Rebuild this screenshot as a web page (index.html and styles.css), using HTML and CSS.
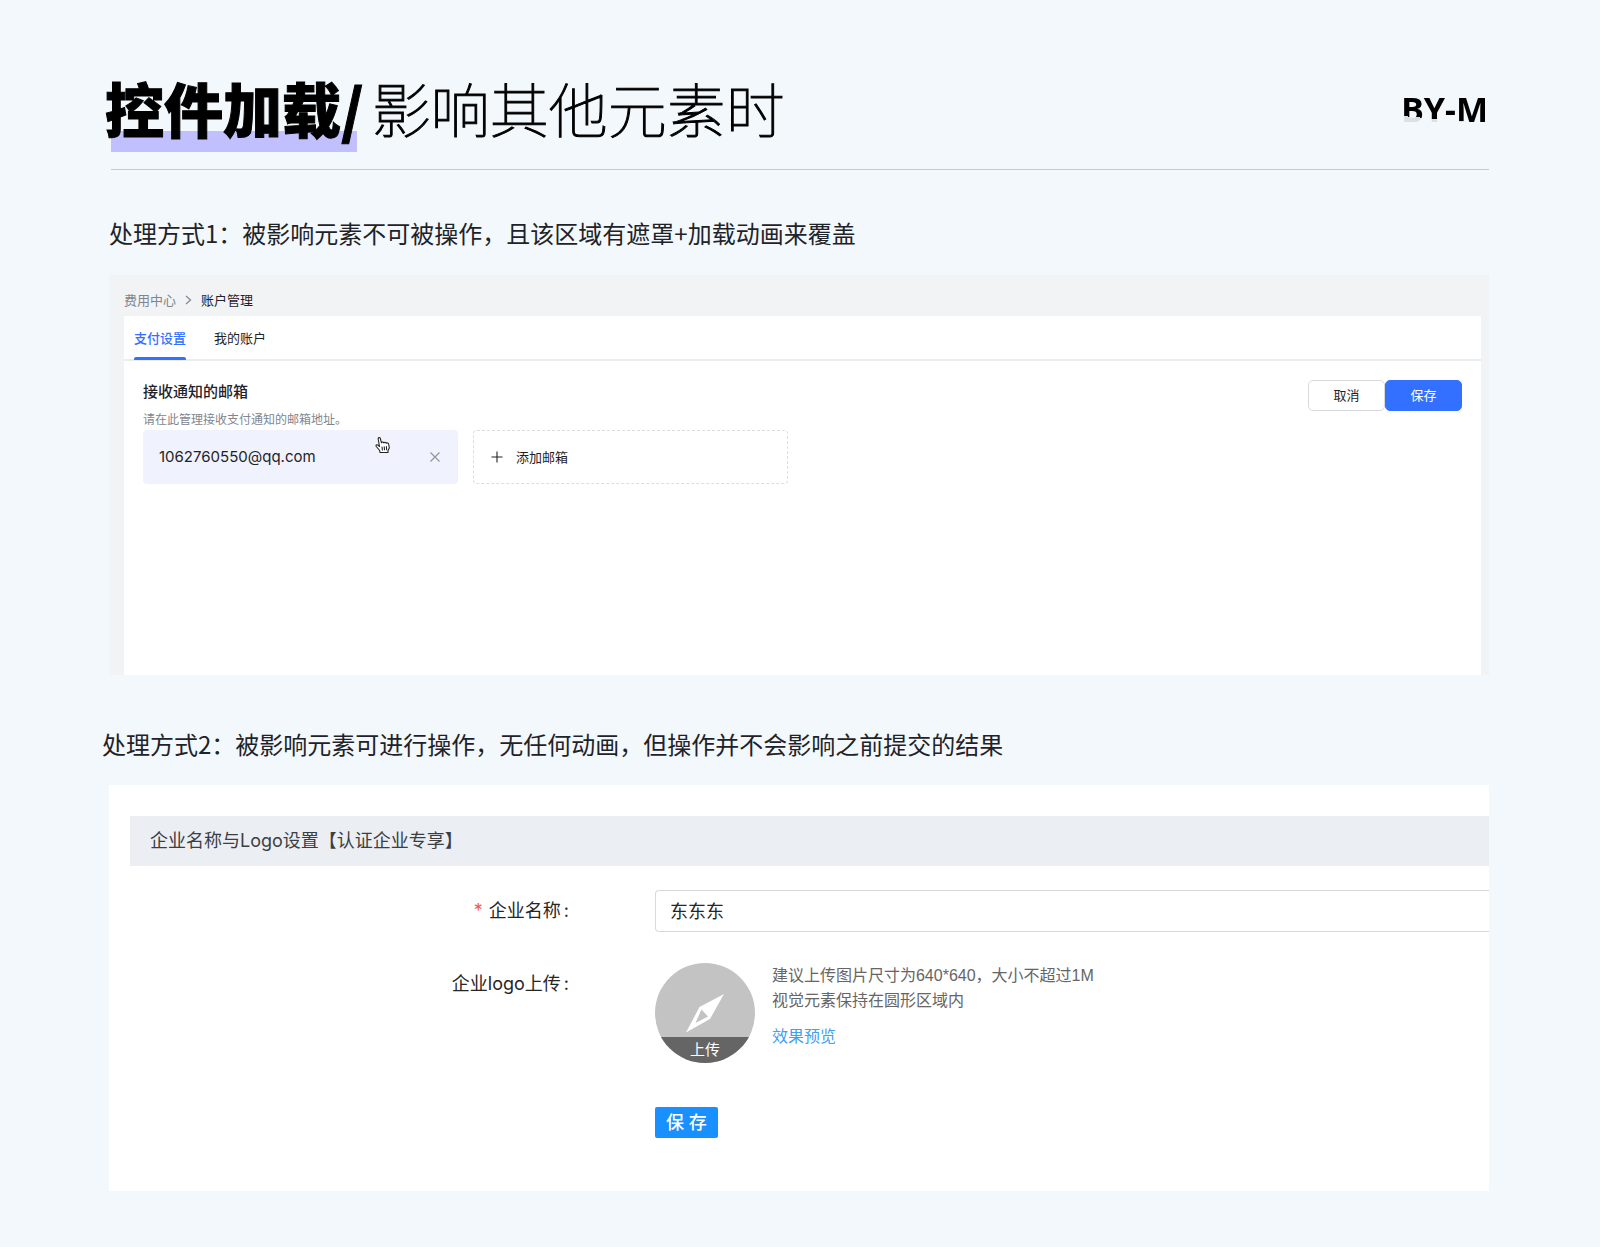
FILE: index.html
```html
<!DOCTYPE html>
<html lang="zh-CN">
<head>
<meta charset="utf-8">
<meta name="viewport" content="width=device-width, initial-scale=1">
<title>控件加载/影响其他元素时</title>
<link rel="stylesheet" href="styles.css">
</head>
<body>
<main class="page">
  <header class="header">
    <h1 class="title"><span class="title-strong">控件加载/</span><span class="title-thin">影响其他元素时</span></h1>
    <span class="brand">BY-M</span>
  </header>

  <h2 class="note">处理方式1：被影响元素不可被操作，且该区域有遮罩+加载动画来覆盖</h2>
  <section class="panel billing">
    <nav class="crumbs">
      <a href="#" class="crumb">费用中心</a>
      <svg class="crumb-sep" width="7" height="10" viewBox="0 0 7 10" fill="none" stroke="#8a9099" stroke-width="1.4"><path d="M1 1l4.5 4L1 9"/></svg>
      <span class="crumb-current">账户管理</span>
    </nav>
    <div class="sheet">
      <div class="tabs">
        <button type="button" class="tab tab-active">支付设置</button>
        <button type="button" class="tab">我的账户</button>
      </div>
      <div class="settings">
        <div class="settings-main">
          <h3 class="settings-title">接收通知的邮箱</h3>
          <p class="settings-desc">请在此管理接收支付通知的邮箱地址。</p>
          <div class="mails">
            <div class="mail">
              <span>1062760550@qq.com</span>
              <button type="button" class="mail-remove" aria-label="删除邮箱">
                <svg width="10" height="10" viewBox="0 0 10 10" stroke="#8f959e" stroke-width="1.2"><path d="M.5.5l9 9M9.500.5l-9 9"/></svg>
              </button>
              <svg class="pointer" width="16" height="18" viewBox="0 0 16 18" fill="#fff" stroke="#222" stroke-width="1.1" stroke-linejoin="round" stroke-linecap="round">
                <path d="M5 16.500L4.700 14.500 1.300 10.500C.5 9.300 1.800 8.200 3 9.200L4.500 10.500 3.200 3C3 1.300 4.800.9 5.300 2.500L6.500 6.800C7 5.700 8.500 5.800 8.800 6.900 9.500 5.900 11 6.200 11.200 7.300 12.200 6.500 13.500 7 13.700 8.300L14.300 12 13 14.500V16.500Z"/>
                <path d="M7 11l.4 3M9.200 10.800l.3 3M11.400 10.600l.2 3" fill="none"/>
              </svg>
            </div>
            <button type="button" class="mail-add">
              <svg width="12" height="12" viewBox="0 0 12 12" stroke="#1f2329" stroke-width="1.1"><path d="M6 .5v11M.5 6h11"/></svg>
              <span>添加邮箱</span>
            </button>
          </div>
        </div>
        <div class="actions">
          <button type="button" class="btn">取消</button>
          <button type="button" class="btn btn-primary">保存</button>
        </div>
      </div>
    </div>
  </section>

  <h2 class="note note-wide">处理方式2：被影响元素可进行操作，无任何动画，但操作并不会影响之前提交的结果</h2>
  <section class="panel company">
    <h3 class="company-title">企业名称与Logo设置【认证企业专享】</h3>
    <form class="form">
      <label class="label" for="company"><span class="required">*</span>企业名称<span class="colon">:</span></label>
      <input class="input" id="company" type="text" value="东东东">
      <label class="label" for="upload">企业logo上传<span class="colon">:</span></label>
      <div class="upload-row">
        <button type="button" class="upload" id="upload">
          <svg class="compass" width="38" height="38" viewBox="0 0 38 38" fill="#fff" fill-rule="evenodd"><path d="M38 0L24 25 0 38.500 13.500 13ZM15.500 15.500L9.500 29 22 22.500Z"/></svg>
          <span class="upload-text">上传</span>
        </button>
        <div class="hint">
          <p>建议上传图片尺寸为640*640，大小不超过1M</p>
          <p>视觉元素保持在圆形区域内</p>
          <a href="#" class="preview">效果预览</a>
        </div>
      </div>
      <button type="button" class="save">保 存</button>
    </form>
  </section>
</main>
</body>
</html>
```
FILE: styles.css
```css
* {
  box-sizing: border-box;
}

body {
  margin: 0;
  background: #f2f8fc;
  color: #1f2329;
  font-family: Inter, "Noto Sans CJK SC", sans-serif;
}

h1, h2, h3, p {
  margin: 0;
  font-weight: 400;
}

button, input {
  margin: 0;
  font-family: inherit;
  color: inherit;
}

button {
  padding: 0;
  border: 0;
  background: none;
  cursor: pointer;
}

a {
  text-decoration: none;
}

.page {
  padding: 64px 111px 56px 109px;
}

.header {
  display: flex;
  justify-content: space-between;
  align-items: center;
  height: 106px;
  margin-left: 2px;
  padding-bottom: 18px;
  border-bottom: 1px solid #c6cbd0;
}

.title {
  display: flex;
  gap: 8px;
  margin-left: -6px;
  font-family: "Noto Sans CJK SC", sans-serif;
  font-size: 59px;
  line-height: 88px;
  color: #000;
  white-space: nowrap;
}

.title-strong {
  font-weight: 900;
  -webkit-text-stroke: 1px #000;
  background: linear-gradient(#c2bfff, #c2bfff) 6px 67px / 246px 21px no-repeat;
}

.title-thin {
  font-weight: 100;
  -webkit-text-stroke: 1px #000;
}

.brand {
  padding-top: 2px;
  margin-right: 1px;
  font-family: "Noto Sans", sans-serif;
  font-size: 34px;
  font-weight: 700;
  line-height: 46px;
  color: transparent;
  background: linear-gradient(185deg, #000 71%, #dcdfe4 71%);
  background-clip: text;
  -webkit-background-clip: text;
}

.note {
  margin: 45px 0 24px;
  font-family: "Noto Sans CJK SC", sans-serif;
  font-size: 24px;
  line-height: 36px;
  white-space: nowrap;
}

.note-wide {
  margin: 51px 0 23px -7px;
}

.panel {
  overflow: hidden;
}

.billing {
  display: flex;
  flex-direction: column;
  min-height: 400px;
  padding: 0 8px 0 15px;
  background: #f2f3f5;
  font-size: 13px;
}

.crumbs {
  display: flex;
  align-items: center;
  height: 41px;
  padding-top: 8px;
}

.crumb {
  color: #80868f;
}

.crumb-sep {
  margin: 0 9px 0 9px;
}

.sheet {
  flex: 1;
  background: #fff;
}

.tabs {
  display: flex;
  gap: 28px;
  height: 45px;
  padding: 0 10px;
  border-bottom: 2px solid #ecedef;
}

.tab {
  height: 44px;
  padding-bottom: 2px;
  font-size: 13px;
}

.tab-active {
  position: relative;
  color: #3370ff;
  font-weight: 500;
}

.tab-active::after {
  content: "";
  position: absolute;
  left: 0;
  right: 0;
  bottom: 0;
  height: 3px;
  border-radius: 2px 2px 0 0;
  background: #3370ff;
}

.settings {
  display: flex;
  justify-content: space-between;
  padding: 19px 19px 0;
}

.settings-title {
  font-size: 15px;
  font-weight: 500;
  line-height: 24px;
}

.settings-desc {
  padding-top: 6px;
  font-size: 12px;
  line-height: 20px;
  color: #80868f;
}

.mails {
  display: flex;
  gap: 15px;
}

.mail, .mail-add {
  display: flex;
  align-items: center;
  width: 315px;
  height: 54px;
  border-radius: 4px;
}

.mail {
  position: relative;
  justify-content: space-between;
  padding: 0 18px 1px 16px;
  background: #f0f3fd;
  font-size: 15px;
}

.mail-remove {
  display: flex;
}

.pointer {
  position: absolute;
  left: 232px;
  top: 6px;
}

.mail-add {
  gap: 13px;
  padding: 0 17px 1px;
  border: 1px dashed #dcdee1;
  font-size: 13px;
}

.actions {
  display: flex;
}

.btn {
  width: 77px;
  height: 31px;
  padding-bottom: 2px;
  border: 1px solid #d7d9dd;
  border-radius: 5px;
  background: #fff;
  font-size: 13px;
}

.btn-primary {
  border-color: #3370ff;
  background: #3370ff;
  color: #fff;
}

.company {
  min-height: 406px;
  padding: 31px 0 52px;
  background: #fff;
}

.company-title {
  margin-left: 21px;
  padding-left: 20px;
  background: #ebeef3;
  color: #3c3e42;
  font-size: 18px;
  line-height: 50px;
}

.form {
  display: grid;
  grid-template-columns: 33.33% 1fr;
  column-gap: 86px;
  row-gap: 31px;
  padding-top: 24px;
  font-size: 18px;
}

.label {
  text-align: right;
  line-height: 42px;
  color: #262626;
}

.required {
  margin-right: 6px;
  color: #f5574f;
}

.colon {
  margin-left: 3px;
}

.input {
  height: 42px;
  min-width: 0;
  padding: 0 14px 2px;
  border: 1px solid #d9d9d9;
  border-right: 0;
  border-radius: 4px 0 0 4px;
  background: #fff;
  color: #262626;
  font-size: 18px;
}

.upload-row {
  display: flex;
  gap: 17px;
}

.upload {
  display: flex;
  flex-direction: column;
  justify-content: space-between;
  align-items: center;
  width: 100px;
  height: 100px;
  padding-top: 31px;
  border-radius: 50%;
  overflow: hidden;
  background: #c3c3c3;
}

.compass {
  flex: none;
}

.upload-text {
  width: 100%;
  height: 26px;
  background: #656565;
  color: #fff;
  font-size: 15px;
  line-height: 26px;
}

.hint {
  font-family: "Liberation Sans", "Noto Sans CJK SC", sans-serif;
  font-size: 16px;
  line-height: 25px;
  color: #666;
}

.preview {
  display: inline-block;
  margin-top: 11px;
  color: #40a0f0;
}

.save {
  grid-column: 2;
  justify-self: start;
  width: 63px;
  height: 31px;
  margin-top: 13px;
  padding-bottom: 3px;
  border-radius: 2px;
  background: #1890ff;
  color: #fff;
  font-size: 18px;
  font-weight: 500;
}
```
